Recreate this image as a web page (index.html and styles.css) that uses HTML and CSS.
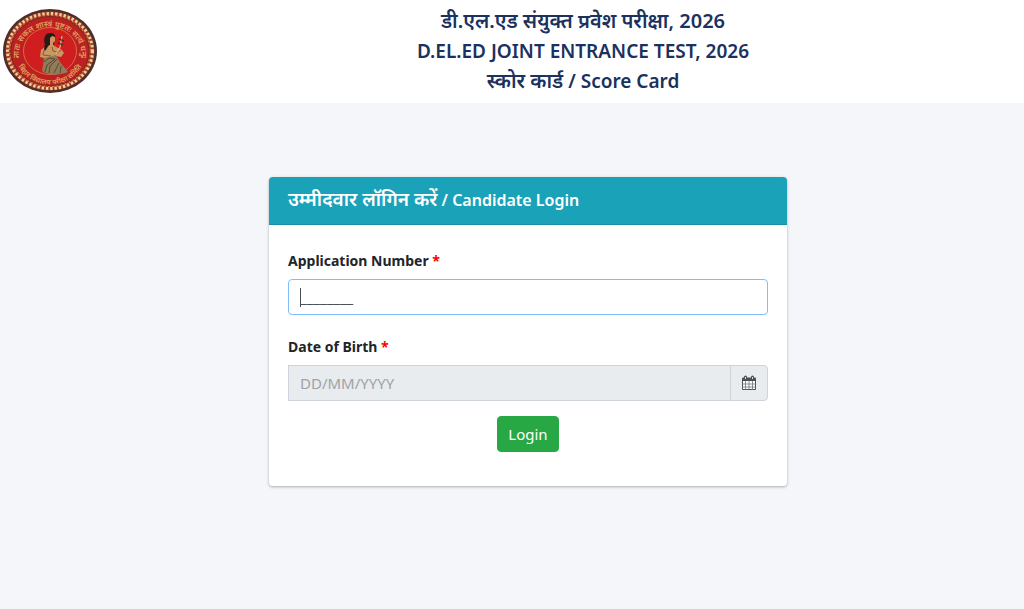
FILE: index.html
```html
<!DOCTYPE html>
<html lang="hi">
  <head>
    <title>D.EL.ED Score Card</title>
    <meta charset="utf-8" />
    <meta name="viewport" content="width=device-width, initial-scale=1" />
    <link rel="stylesheet" href="styles.css">
  </head>
  <body>
    <header class="site-header">
      <svg class="logo" viewBox="0 0 96 88" role="img" aria-label="बिहार विद्यालय परीक्षा समिति">
        <defs>
          <path id="arcTop" d="M20 59A31 27.500 0 1 1 76 59" />
          <path id="arcBottom" d="M13 46A35 31.500 0 0 0 83 46" />
        </defs>
        <ellipse cx="48" cy="44" rx="47" ry="42" fill="#4d2f2a" />
        <ellipse cx="48" cy="44" rx="44.500" ry="39.500" fill="#a23b29" />
        <ellipse cx="48" cy="44" rx="42.500" ry="37.500" fill="none" stroke="#efcf98" stroke-width="3" stroke-dasharray="2.400 1.900" />
        <ellipse cx="48" cy="44" rx="40.500" ry="35.500" fill="none" stroke="#d28a4c" stroke-width="1.500" stroke-dasharray="1.500 2.800" />
        <ellipse cx="48" cy="44" rx="39" ry="34.500" fill="#bd2021" stroke="#82251d" />
        <ellipse cx="48" cy="44" rx="26.500" ry="23.500" fill="#cf1d20" stroke="#df7440" stroke-width="0.900" />
        <text class="logo-text logo-text-top"><textPath href="#arcTop" startOffset="50%" text-anchor="middle">नातः सकल शास्त्रं पुष्टतः सत्यं धनुः</textPath></text>
        <text class="logo-text"><textPath href="#arcBottom" startOffset="50%" text-anchor="middle">बिहार विद्यालय परीक्षा समिति</textPath></text>
        <circle cx="16" cy="50" r="0.900" fill="#e5a15b" />
        <circle cx="80" cy="50" r="0.900" fill="#e5a15b" />
        <!-- figure -->
        <path d="M43 38C41 31 43 26 48 26C53 26 54 29 53 32L51 39L45 46L41 48L42 42Z" fill="#2b1b18" />
        <path d="M48 31L50 29L53 30L53 34L51 36L51 38L56 41L59 42L62 46L59 50L54 49L54 54L42 55L42 51L38 50L39 43L44 39L48 38Z" fill="#c99762" />
        <path d="M42 43L41 48L49 49M50 40L51 44L56 45M59 43L54 47" fill="none" stroke="#80522f" stroke-width="0.900" />
        <path d="M44 32L48 32L47 38L43 44L42 42Z" fill="#2b1b18" />
        <path d="M42 51L54 48L58 55L66 65C55 69 45 68 40 64L41 58Z" fill="#8f7c59" />
        <path d="M42 55L47 51L53 52L45 58L43 65M55 52L48 59L47 66M57 56L52 66M59 59L58 66" fill="none" stroke="#51432f" stroke-width="0.900" />
        <path d="M54 47L58 40L60 29" fill="none" stroke="#ddb27e" stroke-width="1.300" />
        <path d="M57 32L62 34M56 36L61 38" stroke="#3c2822" stroke-width="1.100" />
      </svg>
      <h1 class="site-title">
        <span class="hindi">डी.एल.एड संयुक्त प्रवेश परीक्षा, 2026</span>
        <span>D.EL.ED JOINT ENTRANCE TEST, 2026</span>
        <span><span class="hindi">स्कोर कार्ड</span> / Score Card</span>
      </h1>
    </header>
    <main class="content">
      <section class="card">
        <h2 class="card-header"><span class="hindi">उम्मीदवार लॉगिन करें</span> / Candidate Login</h2>
        <form class="card-body">
          <div class="form-group">
            <label for="appNo">Application Number <span class="required">*</span></label>
            <input class="form-control" id="appNo" type="text" value="________" autofocus>
          </div>
          <div class="form-group">
            <label for="dob">Date of Birth <span class="required">*</span></label>
            <div class="input-group">
              <input class="form-control" id="dob" type="text" placeholder="DD/MM/YYYY" readonly>
              <button class="date-button" type="button" aria-label="Calendar">
                <svg class="icon" viewBox="0 0 16 16">
                  <path d="M1.500 3H14.500V14.500H1.500Z" fill="#fff" stroke="#495057" />
                  <path d="M1 3H15V6H1Z" fill="#495057" />
                  <path d="M1 9H15M1 12H15M4.500 6V15M8 6V15M11.500 6V15" stroke="#6b747d" stroke-width="0.800" />
                  <path d="M4.500 2V4M11.500 2V4" stroke="#495057" stroke-width="3" stroke-linecap="round" />
                  <path d="M4.500 2V4M11.500 2V4" stroke="#dce1e5" stroke-width="1" />
                </svg>
              </button>
            </div>
          </div>
          <button class="login-button" type="submit">Login</button>
        </form>
      </section>
    </main>
    <script>
      // start typing at the beginning of the mask
      var appNo = document.getElementById("appNo");
      appNo.focus();
      appNo.setSelectionRange(0, 0);
    </script>
  </body>
</html>
```
FILE: styles.css
```css
* {
  box-sizing: border-box;
}

body {
  margin: 0;
  background: #f4f6fa;
  color: #212529;
  font: 15px/24px "Noto Sans", "Open Sans", sans-serif;
}

.site-header {
  display: grid;
  grid-template-columns: 96px 1fr;
  column-gap: 44px;
  align-items: center;
  padding: 6px 0 7px 2px;
  background: #fff;
}

.logo {
  display: block;
  width: 100%;
}

.logo-text {
  fill: #dfa060;
  font-size: 7px;
  font-weight: 600;
}

.logo-text-top {
  font-size: 8px;
}

.site-title {
  margin: 0;
  color: #1b315e;
  font-size: 19px;
  font-weight: 600;
  line-height: 30px;
  text-align: center;
}

.site-title > span {
  display: block;
  height: 30px;
}

.site-title .hindi {
  font-size: 20px;
}

.content {
  padding: 74px 0 40px 32px;
}

.card {
  max-width: 518px;
  margin: 0 auto;
  background: #fff;
  border-radius: 4px;
  box-shadow: 0 1px 3px rgba(0, 0, 0, 0.3);
  overflow: hidden;
}

.card-header {
  margin: 0;
  padding: 11px 19px 12px;
  background: #19a2b8;
  border-bottom: 1px solid #168fa2;
  color: #fff;
  font-size: 16px;
  font-weight: 600;
  line-height: 24px;
}

.card-header .hindi {
  font-size: 19px;
  line-height: 20px;
}

.card-body {
  padding: 24px 19px 34px;
}

.form-group {
  margin-bottom: 20px;
}

.form-group + .form-group {
  margin-bottom: 15px;
}

label {
  display: block;
  margin-bottom: 6px;
  font-size: 14px;
  font-weight: 700;
}

.required {
  color: #f00;
}

.form-control {
  display: block;
  width: 100%;
  height: 36px;
  padding: 6px 11px;
  background: #fff;
  border: 1px solid #ced4da;
  border-radius: 4px;
  color: #495057;
  font: inherit;
}

.form-control:focus {
  /* steady caret */
  background: #fff linear-gradient(#495057, #495057) 11px 8px / 1px 19px no-repeat;
  border-color: #80bdff;
  caret-color: transparent;
  outline: 0;
}

.form-control[readonly] {
  background: #e9ecef;
  border-radius: 0;
}

.form-control::placeholder {
  color: #9da3a8;
  opacity: 1;
}

.input-group {
  display: flex;
}

.date-button {
  display: flex;
  flex: none;
  align-items: center;
  justify-content: center;
  width: 38px;
  margin-left: -1px;
  padding: 0;
  background: #e9ecef;
  border: 1px solid #ced4da;
  border-radius: 0 4px 4px 0;
}

.icon {
  width: 16px;
  height: 16px;
}

.login-button {
  display: block;
  margin: 0 auto;
  padding: 5px 10px;
  background: #28a745;
  border: 1px solid #28a745;
  border-radius: 4px;
  color: #fff;
  font: inherit;
}
```
